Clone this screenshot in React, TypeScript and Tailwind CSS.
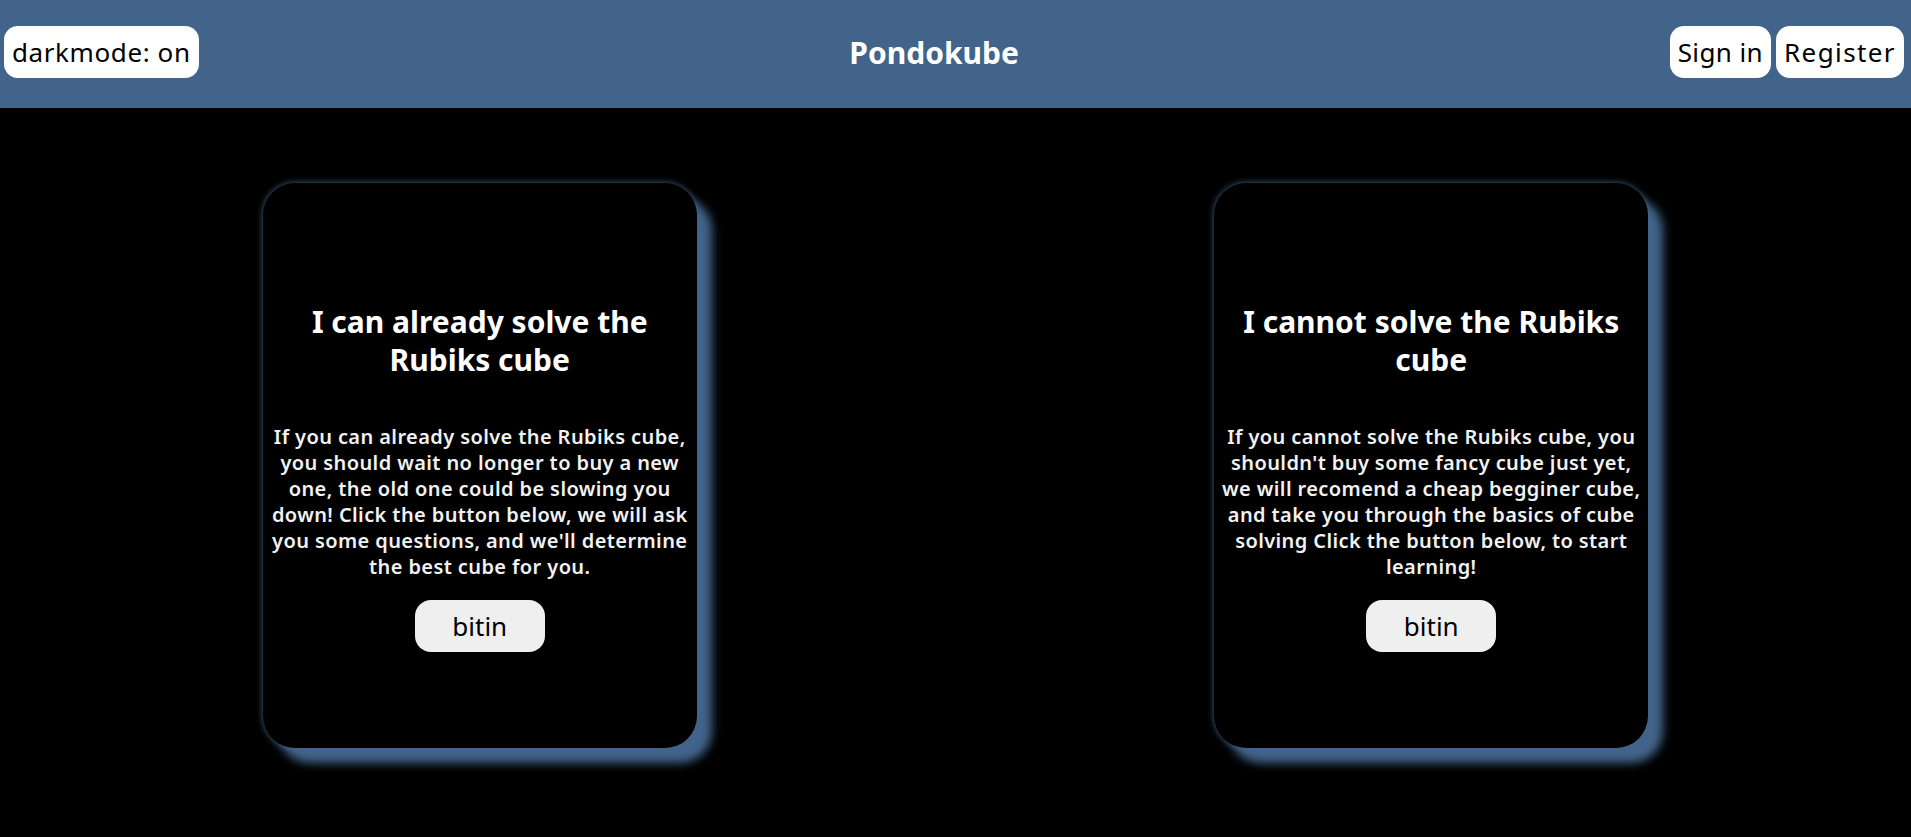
import React from 'react';

const cards = [
    {
        title: 'I can already solve the Rubiks cube',
        body: "If you can already solve the Rubiks cube, you should wait no longer to buy a new one, the old one could be slowing you down! Click the button below, we will ask you some questions, and we'll determine the best cube for you.",
    },
    {
        title: 'I cannot solve the Rubiks cube',
        body: "If you cannot solve the Rubiks cube, you shouldn't buy some fancy cube just yet, we will recomend a cheap begginer cube, and take you through the basics of cube solving Click the button below, to start learning!",
    },
];

export default function App() {
    return (
        <div className="min-h-screen bg-black font-['Noto_Sans',sans-serif]">
            <header className="h-[108px] bg-[#42648a] flex justify-between items-start pt-[26px] px-[4px]">
                <button className="h-[52px] px-[8px] bg-white rounded-[14px] text-[26px] tracking-[0.6px] text-black leading-none">
                    darkmode: on
                </button>
                <h1 className="text-[30px] font-bold text-white leading-[54px]">Pondokube</h1>
                <div className="flex gap-[5px] pr-[3px]">
                    <button className="h-[52px] px-[8px] bg-white rounded-[14px] text-[26px] tracking-[0.4px] text-black leading-none">
                        Sign in
                    </button>
                    <button className="h-[52px] px-[8px] bg-white rounded-[14px] text-[26px] tracking-[1.4px] text-black leading-none">
                        Register
                    </button>
                </div>
            </header>

            <main className="grid grid-cols-2 justify-items-center pt-[75px] px-[4px]">
                {cards.map((card) => (
                    <Card key={card.title} title={card.title} body={card.body} />
                ))}
            </main>
        </div>
    );
}

function Card({ title, body }: { title: string; body: string }) {
    return (
        <div className="w-[434px] h-[565px] bg-black rounded-[32px] shadow-[15px_15px_10px_#42648a,0_0_6px_#42648a] flex flex-col items-center pt-[120px] px-[4px] text-center">
            <h2 className="text-[30px] leading-[38px] font-bold text-white">{title}</h2>
            <p className="mt-[45px] text-[20px] leading-[26px] font-semibold tracking-[0.4px] text-[#f2f2f2]">{body}</p>
            <button className="mt-[20px] w-[130px] h-[52px] bg-[#efefef] rounded-[16px] text-[26px] text-black">
                bitin
            </button>
        </div>
    );
}
